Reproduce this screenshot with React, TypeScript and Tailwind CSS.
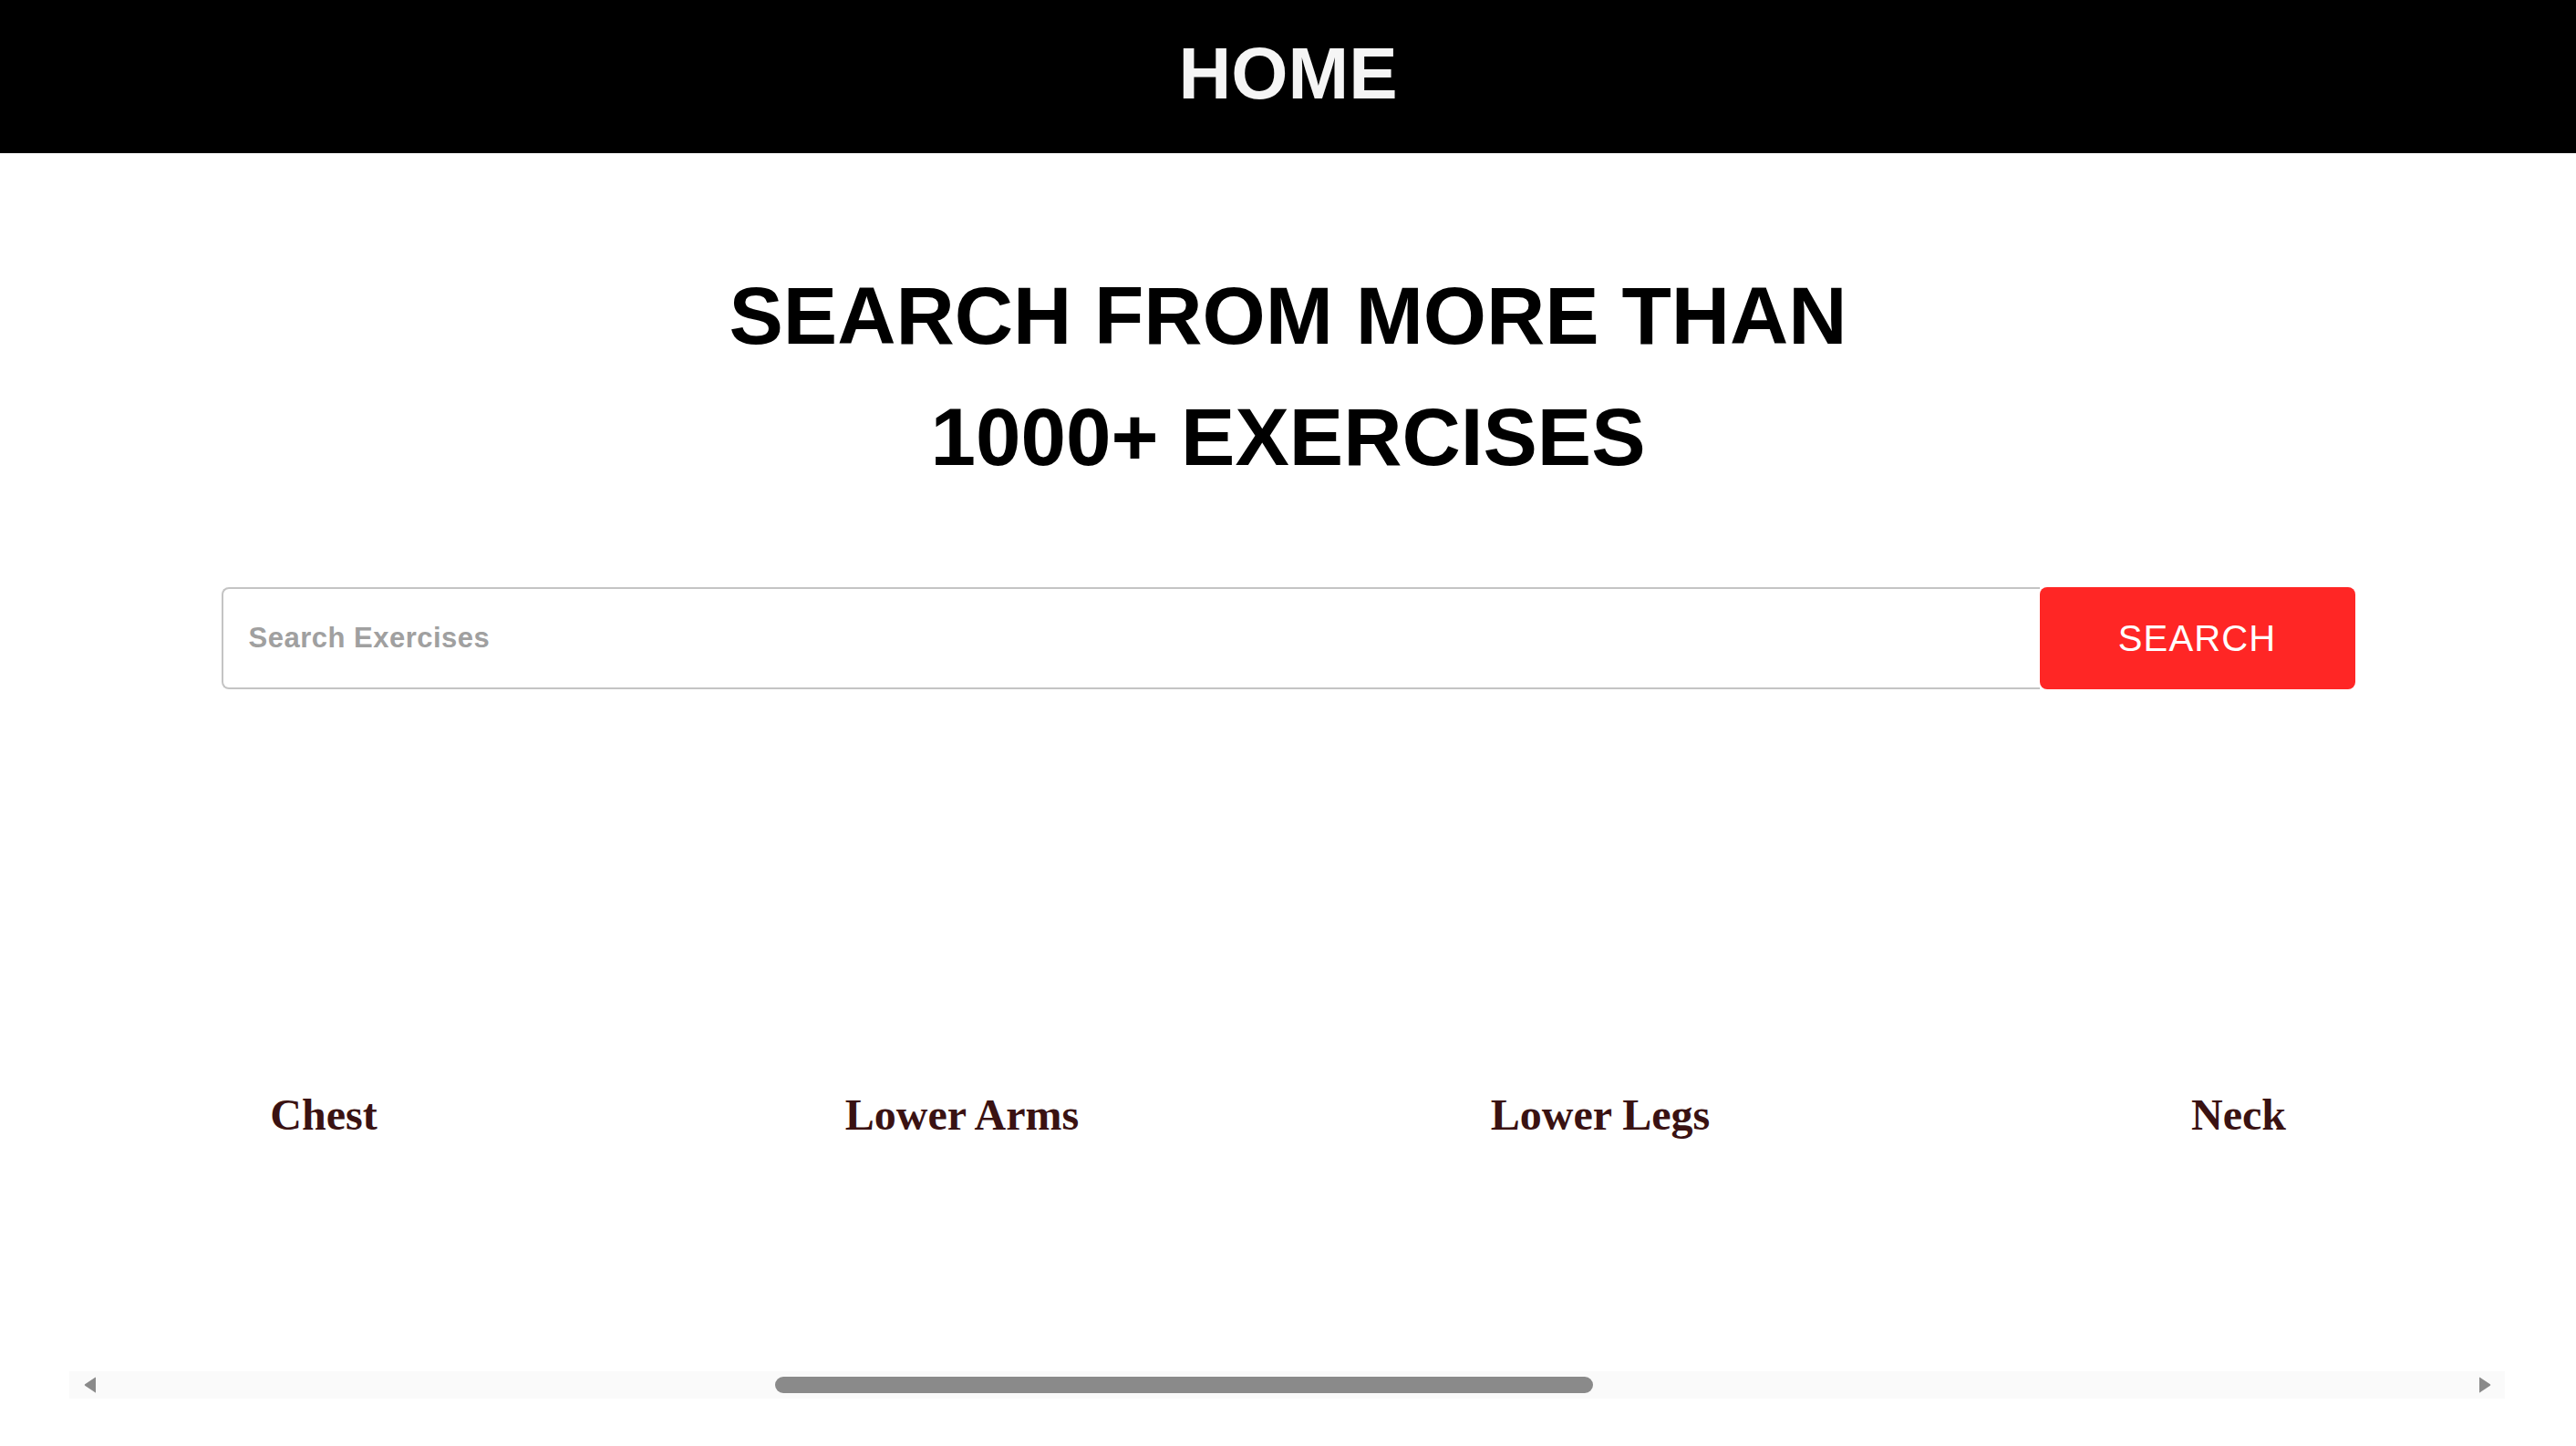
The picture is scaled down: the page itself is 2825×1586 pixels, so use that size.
import React from 'react';

const bodyParts = ['Chest', 'Lower Arms', 'Lower Legs', 'Neck'];

const Home: React.FC = () => {
  return (
    <div className="bg-white min-h-screen font-['Liberation_Sans',Arial,sans-serif]">
      {/* Navbar */}
      <header className="h-[168px] bg-black flex items-center justify-center pb-[7px]">
        <h1 className="text-[80px] font-bold text-[#f5f5f5] leading-none">HOME</h1>
      </header>

      {/* Hero / search */}
      <section className="flex flex-col items-center">
        <h2 className="mt-[112px] text-[89px] leading-[133px] font-bold text-black text-center">
          SEARCH FROM MORE THAN
          <br />
          1000+ EXERCISES
        </h2>

        <div className="mt-[98px] flex w-[2340px] h-[112px]">
          <input
            type="text"
            placeholder="Search Exercises"
            className="w-[1994px] h-full border-2 border-r-0 border-[#c4c4c4] rounded-l-lg pl-[28px] text-[31px] font-bold tracking-[0.5px] text-black outline-none placeholder:text-[#a0a0a0]"
          />
          <button className="w-[346px] h-full bg-[#ff2625] rounded-lg text-white text-[40px] tracking-[1.1px]">
            SEARCH
          </button>
        </div>
      </section>

      {/* Body part scroll menu */}
      <section className="mt-[98px] ml-[76px] mr-[78px]">
        <div className="overflow-hidden flex pl-[9px] gap-[160px]">
          {bodyParts.map((part) => (
            <div key={part} className="shrink-0 w-[540px] h-[564px] bg-white flex flex-col items-center justify-center gap-[94px]">
              <div className="w-[80px] h-[80px]" />
              <p className="font-['Liberation_Serif','Times_New_Roman',serif] font-bold text-[48px] leading-[56px] text-[#3a1212]">
                {part}
              </p>
            </div>
          ))}
        </div>

        {/* scrollbar */}
        <div className="mt-[86px] h-[30px] bg-[#fafafa] flex items-center pl-[16px] pr-[15px]">
          <svg width="14" height="18" viewBox="0 0 14 18" className="shrink-0">
            <path d="M13 1 L13 17 Q13 18 12 17 L1.5 10 Q0 9 1.5 8 L12 1 Q13 0 13 1 Z" fill="#8a8a8a" />
          </svg>
          <div className="ml-[744px] w-[897px] h-[18px] rounded-full bg-[#8a8a8a]" />
          <svg width="14" height="18" viewBox="0 0 14 18" className="shrink-0 ml-auto">
            <path d="M1 1 L1 17 Q1 18 2 17 L12.5 10 Q14 9 12.5 8 L2 1 Q1 0 1 1 Z" fill="#8a8a8a" />
          </svg>
        </div>
      </section>
    </div>
  );
};

export default function App() {
  return <Home />;
}
